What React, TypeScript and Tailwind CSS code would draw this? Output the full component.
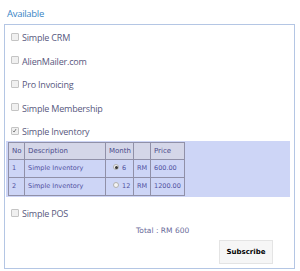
import React from "react";

const items = ["Simple CRM", "AlienMailer.com", "Pro Invoicing", "Simple Membership"];

function Box({ checked }: { checked?: boolean }) {
  return (
    <span className="relative inline-block w-[8px] h-[8px] border border-[#c4c4c4] bg-[#f0f0f0] rounded-[1px] shrink-0 mt-[-3px]">
      {checked && (
        <svg viewBox="0 0 8 8" className="absolute left-0 top-0 w-[6px] h-[6px]">
          <path d="M1.2 3.8 L2.8 5.4 L5.4 1.4" stroke="#666" strokeWidth="1.1" fill="none" />
        </svg>
      )}
    </span>
  );
}

function Item({ label, checked, h = "h-[23.5px]", pt = "pt-[7px]" }: { label: string; checked?: boolean; h?: string; pt?: string }) {
  return (
    <div className={`flex items-start gap-[3px] ${h} pl-[6px] ${pt}`}>
      <span className="h-[12px] flex items-center">
        <Box checked={checked} />
      </span>
      <span className="text-[9px] leading-[12px] tracking-[-0.2px] text-[#58587e]">{label}</span>
    </div>
  );
}

function Radio({ on }: { on?: boolean }) {
  return (
    <span className="inline-flex items-center justify-center w-[6px] h-[6px] rounded-full border border-[#b0b0b0] bg-[#f4f4f4] mt-[-4px]">
      {on && <span className="w-[3px] h-[3px] rounded-full bg-[#333]" />}
    </span>
  );
}

export default function App() {
  const td = "border border-[#9090a8] px-[3px] text-[6.5px] text-[#5050a0] text-left";
  const th = "border border-[#9090a8] px-[3px] text-[7px] font-normal text-[#4a4a8a] text-left";
  const vf = { fontFamily: '"DejaVu Sans", Verdana, sans-serif' };
  return (
    <div className="w-[300px] h-[271px] bg-white" style={{ fontFamily: '"Open Sans", "Liberation Sans", sans-serif' }}>
      <div className="pl-[7px] pt-[8px] h-[24px] text-[9.5px] leading-[11px] tracking-[-0.3px] text-[#3a86c6]">Available</div>
      <div className="ml-[4px] w-[291px] h-[245px] border border-[#b4c6e4]">
        {items.map((i) => (
          <Item key={i} label={i} />
        ))}
        <Item label="Simple Inventory" checked h="h-[22px]" />
        <div className="ml-[1px] bg-[#cdd5f6] pt-[1px] pb-[1px] pl-[2px] w-[284px]">
          <table className="border-collapse table-fixed w-[176px]" style={vf}>
            <colgroup>
              <col className="w-[16px]" />
              <col className="w-[81px]" />
              <col className="w-[28px]" />
              <col className="w-[17px]" />
              <col className="w-[34px]" />
            </colgroup>
            <thead>
              <tr className="h-[17px] bg-[#d4d6e8]">
                <th className={th}>No</th>
                <th className={th}>Description</th>
                <th className={`${th} px-[2px]`}>Month</th>
                <th className={th}></th>
                <th className={th}>Price</th>
              </tr>
            </thead>
            <tbody>
              <tr className="h-[18px]">
                <td className={td}>1</td>
                <td className={td}>Simple Inventory</td>
                <td className={`${td} pl-[7px]`}>
                  <span className="inline-flex items-center gap-[3px]"><Radio on /><span>6</span></span>
                </td>
                <td className={`${td} px-[2px]`}>RM</td>
                <td className={td}>600.00</td>
              </tr>
              <tr className="h-[18px]">
                <td className={td}>2</td>
                <td className={td}>Simple Inventory</td>
                <td className={`${td} pl-[7px]`}>
                  <span className="inline-flex items-center gap-[3px]"><Radio /><span>12</span></span>
                </td>
                <td className={`${td} px-[2px]`}>RM</td>
                <td className={td}>1200.00</td>
              </tr>
            </tbody>
          </table>
        </div>
        <Item label="Simple POS" h="h-[29px]" pt="pt-[11px]" />
        <div className="pl-[131px] text-[7.5px] leading-[10px] text-[#6a6a9a]" style={vf}>
          Total : RM 600
        </div>
        <div className="flex justify-end pr-[21px] mt-[4px]">
          <button
            className="w-[54px] h-[24px] bg-[#f6f6f6] border border-[#e4e4e4] text-[7px] font-bold text-black"
            style={vf}
          >
            Subscribe
          </button>
        </div>
      </div>
    </div>
  );
}
